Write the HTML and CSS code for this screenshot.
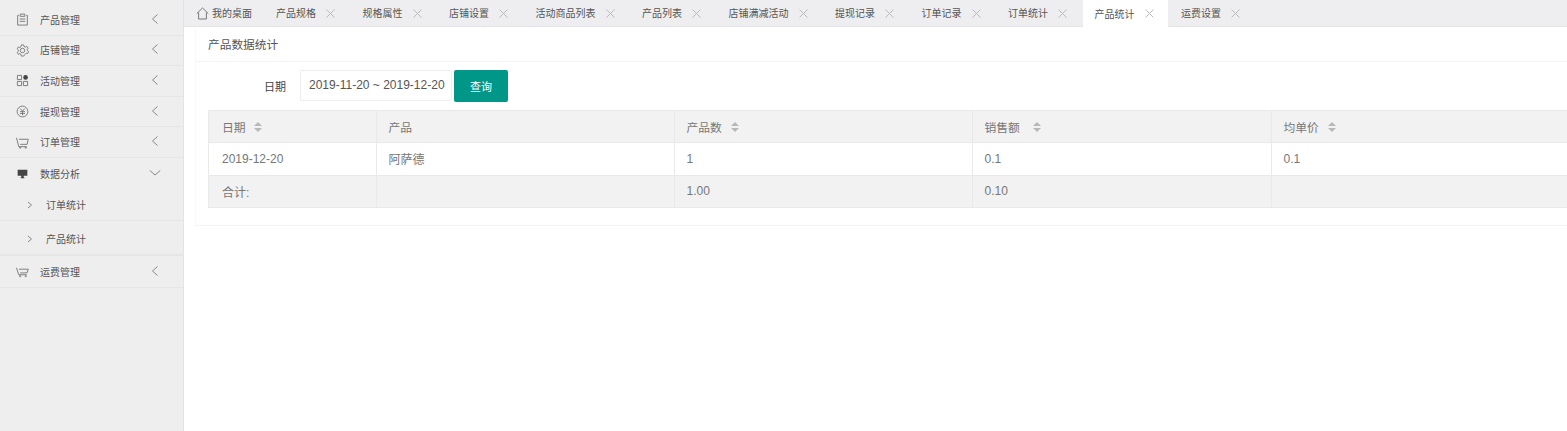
FILE: index.html
```html
<!DOCTYPE html>
<html lang="zh">
<head>
<meta charset="utf-8">
<title>产品数据统计</title>
<link rel="stylesheet" href="styles.css">
</head>
<body>
<div class="app">
  <aside class="side">
    <div class="nav-row">
      <svg class="nav-icon" viewBox="0 0 14 14"><path d="M3 2.500H1.800v10.500h10.400V2.500H11M4.500 1.200h5v2.400h-5zM4 6.500h6M4 9h6" /></svg>
      <span class="nav-text">产品管理</span>
      <svg class="chev" viewBox="0 0 12 12"><path d="M8.500 1.500 3.500 6l5 4.500"/></svg>
    </div>
    <div class="nav-row">
      <svg class="nav-icon" viewBox="0 0 14 14"><circle cx="7" cy="7" r="2.400"/><path d="M5.800 1h2.400l.4 1.600 1.500.7 1.500-.8 1.500 2-1 1.200.2 1.300 1.300 1-1 2.200-1.600-.3-1.100 1.100L8.200 13H5.800l-.4-1.800-1.300-.7-1.600.6-1.200-2.100 1.200-1.100V6.300L1.300 5.200l1.200-2 1.600.6 1.300-.9z"/></svg>
      <span class="nav-text">店铺管理</span>
      <svg class="chev" viewBox="0 0 12 12"><path d="M8.500 1.500 3.500 6l5 4.500"/></svg>
    </div>
    <div class="nav-row">
      <svg class="nav-icon" viewBox="0 0 14 14"><path d="M1.500 1.500h4.500v4.500H1.500zM1.500 8h4.500v4.500H1.500zM8 8h4.500v4.500H8z"/><circle class="solid" cx="10.300" cy="3.700" r="2.500"/></svg>
      <span class="nav-text">活动管理</span>
      <svg class="chev" viewBox="0 0 12 12"><path d="M8.500 1.500 3.500 6l5 4.500"/></svg>
    </div>
    <div class="nav-row">
      <svg class="nav-icon" viewBox="0 0 14 14"><circle cx="7" cy="7" r="5.800"/><path d="M4.600 3.800 7 6.600l2.400-2.800M4.300 7.200h5.400M4.300 9.200h5.400M7 6.600V11"/></svg>
      <span class="nav-text">提现管理</span>
      <svg class="chev" viewBox="0 0 12 12"><path d="M8.500 1.500 3.500 6l5 4.500"/></svg>
    </div>
    <div class="nav-row">
      <svg class="nav-icon" viewBox="0 0 14 14"><path d="M.5 2 3 11.500h8.500M3.200 3.500h10l-1.300 5.500H4.500"/><circle cx="4.500" cy="12.500" r=".7"/><circle cx="10.500" cy="12.500" r=".7"/></svg>
      <span class="nav-text">订单管理</span>
      <svg class="chev" viewBox="0 0 12 12"><path d="M8.500 1.500 3.500 6l5 4.500"/></svg>
    </div>
    <div class="nav-row nav-open">
      <svg class="nav-icon" viewBox="0 0 14 14"><path class="solid" d="M1.800 3h10.400v6.500H8.300V11H9v1H5v-1h.7V9.500H1.800z"/></svg>
      <span class="nav-text">数据分析</span>
      <svg class="chev" viewBox="0 0 12 12"><path d="M.8 3.500 6 8l5.200-4.500"/></svg>
    </div>
    <div class="sub-row">
      <svg class="sub-chev" viewBox="0 0 8 8"><path d="M2 1l3.500 3L2 7"/></svg>
      <span class="nav-text">订单统计</span>
    </div>
    <div class="sub-row sub-last">
      <svg class="sub-chev" viewBox="0 0 8 8"><path d="M2 1l3.500 3L2 7"/></svg>
      <span class="nav-text">产品统计</span>
    </div>
    <div class="nav-row nav-final">
      <svg class="nav-icon" viewBox="0 0 14 14"><path d="M.5 3 3 10.500h8.500M3.200 4.500h10l-1.300 4H4.500"/><circle cx="4.500" cy="12" r=".7"/><circle cx="10.500" cy="12" r=".7"/></svg>
      <span class="nav-text">运费管理</span>
      <svg class="chev" viewBox="0 0 12 12"><path d="M8.500 1.500 3.500 6l5 4.500"/></svg>
    </div>
  </aside>
  <main class="main">
    <nav class="tabs">
      <div class="tab tab-home">
        <svg class="home" viewBox="0 0 13 13"><path d="M.8 6.500 6.500 1l5.700 5.500M2.600 5.500V12h7.800V5.500"/></svg>
        <span>我的桌面</span>
      </div>
      <div class="tab"><span>产品规格</span><svg class="close" viewBox="0 0 9 9"><path d="M.5.500l8 8M8.500.500l-8 8"/></svg></div>
      <div class="tab"><span>规格属性</span><svg class="close" viewBox="0 0 9 9"><path d="M.5.500l8 8M8.500.500l-8 8"/></svg></div>
      <div class="tab"><span>店铺设置</span><svg class="close" viewBox="0 0 9 9"><path d="M.5.500l8 8M8.500.500l-8 8"/></svg></div>
      <div class="tab"><span>活动商品列表</span><svg class="close" viewBox="0 0 9 9"><path d="M.5.500l8 8M8.500.500l-8 8"/></svg></div>
      <div class="tab"><span>产品列表</span><svg class="close" viewBox="0 0 9 9"><path d="M.5.500l8 8M8.500.500l-8 8"/></svg></div>
      <div class="tab"><span>店铺满减活动</span><svg class="close" viewBox="0 0 9 9"><path d="M.5.500l8 8M8.500.500l-8 8"/></svg></div>
      <div class="tab"><span>提现记录</span><svg class="close" viewBox="0 0 9 9"><path d="M.5.500l8 8M8.500.500l-8 8"/></svg></div>
      <div class="tab"><span>订单记录</span><svg class="close" viewBox="0 0 9 9"><path d="M.5.500l8 8M8.500.500l-8 8"/></svg></div>
      <div class="tab"><span>订单统计</span><svg class="close" viewBox="0 0 9 9"><path d="M.5.500l8 8M8.500.500l-8 8"/></svg></div>
      <div class="tab tab-active"><span>产品统计</span><svg class="close" viewBox="0 0 9 9"><path d="M.5.500l8 8M8.500.500l-8 8"/></svg></div>
      <div class="tab"><span>运费设置</span><svg class="close" viewBox="0 0 9 9"><path d="M.5.500l8 8M8.500.500l-8 8"/></svg></div>
    </nav>
    <section class="card">
      <h2 class="card-title">产品数据统计</h2>
      <div class="card-body">
        <form class="query">
          <label class="query-label">日期</label>
          <div class="query-input">2019-11-20 ~ 2019-12-20</div>
          <div class="query-btn">查询</div>
        </form>
        <table class="grid">
          <colgroup><col class="c1"><col class="c2"><col class="c3"><col class="c4"><col class="c5"></colgroup>
          <thead>
            <tr>
              <th class="th-first"><span class="th-label">日期</span><span class="sort sort-first"><i class="up"></i><i class="down"></i></span></th>
              <th><span class="th-label">产品</span></th>
              <th><span class="th-label">产品数</span><span class="sort"><i class="up"></i><i class="down"></i></span></th>
              <th><span class="th-label">销售额</span><span class="sort sort-wide"><i class="up"></i><i class="down"></i></span></th>
              <th><span class="th-label">均单价</span><span class="sort"><i class="up"></i><i class="down"></i></span></th>
            </tr>
          </thead>
          <tbody>
            <tr><td class="td-first">2019-12-20</td><td>阿萨德</td><td>1</td><td>0.1</td><td>0.1</td></tr>
            <tr class="total"><td class="td-first">合计:</td><td></td><td>1.00</td><td>0.10</td><td></td></tr>
          </tbody>
        </table>
      </div>
    </section>
  </main>
</div>
</body>
</html>
```
FILE: styles.css
```css
* { box-sizing: border-box; }
html, body { margin: 0; height: 100%; background: #fff; overflow: hidden; }
body { font-family: "Noto Sans CJK SC", "Liberation Sans", sans-serif; color: #666; }
.app { display: flex; height: 431px; width: 1567px; overflow: hidden; }

.side { flex: 0 0 184px; background: #eee; border-right: 1px solid #e4e4e4; padding-top: 5px; }
.nav-row { display: flex; align-items: center; height: 30.6px; border-bottom: 1px solid #e6e6e6; padding-left: 16px; }
.nav-open { height: 31.5px; border-bottom: 0; }
.nav-final { height: 32px; }
.nav-icon { width: 13px; height: 13px; fill: none; stroke: #777; stroke-width: 1; flex: none; }
.nav-icon .solid { fill: #444; stroke: none; }
.nav-text { font-size: 10px; line-height: 14px; color: #555; margin-left: 11px; }
.chev { width: 12px; height: 12px; fill: none; stroke: #888; stroke-width: 1; margin: -2px 22px 0 auto; flex: none; }
.sub-row { display: flex; align-items: center; height: 32px; border-bottom: 1px solid #e6e6e6; padding-left: 26px; }
.sub-last { height: 35px; padding-top: 3px; border-bottom-width: 2px; }
.sub-chev { width: 8px; height: 8px; fill: none; stroke: #888; stroke-width: 1; flex: none; }
.sub-row .nav-text { margin-left: 12px; }

.main { flex: 1 1 auto; min-width: 0; }
.tabs { display: flex; height: 27px; background: #eeeef0; border-bottom: 1px solid #e4e4e6; }
.tab { display: flex; align-items: center; height: 26px; padding-left: 12px; margin-right: 1.5px; font-size: 10px; color: #555; white-space: nowrap; flex: none; }
.tab span { line-height: 14px; }
.tab-home { margin-right: 0; padding-right: 12px; }
.tab-active { background: #fff; height: 27px; }
.home { width: 13px; height: 13px; fill: none; stroke: #777; stroke-width: 1; margin-right: 3px; }
.close { width: 9px; height: 9px; margin-left: 10px; margin-right: 14px; fill: none; stroke: #bbb; stroke-width: 1; }

.card { margin-left: 11px; height: 199px; border-left: 1px solid #f8f8f8; border-bottom: 1px solid #f4f4f4; }
.card-title { margin: 0; height: 35px; padding: 10px 0 0 12px; font-size: 11.700px; line-height: 14px; font-weight: 400; color: #555; border-bottom: 1px solid #f4f4f4; }
.card-body { padding: 7px 0 0 12px; }
.query { display: flex; align-items: center; height: 33px; }
.query-label { width: 78px; text-align: right; font-size: 11px; color: #444; margin-right: 1px; }
.query-input { margin-left: 13px; width: 152px; height: 31px; border: 1px solid #eee; border-radius: 2px; font: 12px/29px "Liberation Sans", sans-serif; color: #555; padding-left: 8px; white-space: nowrap; overflow: hidden; }
.query-btn { margin-left: 2px; width: 54px; height: 32px; background: #009688; border-radius: 2px; color: #fff; font-size: 11px; line-height: 32px; text-align: center; }

.grid { margin-top: 8px; width: 1358px; table-layout: fixed; border-collapse: collapse; font-family: "Liberation Sans", "Noto Sans CJK SC", sans-serif; font-size: 12px; color: #777; }
.c1 { width: 167.500px; } .c2 { width: 298px; } .c3 { width: 298px; } .c4 { width: 299px; } .c5 { width: 295.500px; }
.grid th, .grid td { height: 32.300px; padding: 0 12px; border: 1px solid #e9e9e9; text-align: left; font-weight: 400; white-space: nowrap; }
.grid .th-first, .grid .td-first { padding-left: 13px; }
.grid th { background: #f2f2f2; font-size: 11.800px; }
.grid td:last-child, .grid th:last-child { border-right: 0; }
.total td { background: #f2f2f2; }
.th-label { vertical-align: middle; }
.sort { display: inline-flex; flex-direction: column; gap: 2px; vertical-align: middle; margin-left: 9px; }
.sort-first { margin-left: 8px; }
.sort-wide { margin-left: 13px; }
.sort i { display: block; width: 0; height: 0; border-left: 4px solid transparent; border-right: 4px solid transparent; }
.sort .up { border-bottom: 4px solid #b8b8b8; }
.sort .down { border-top: 4px solid #b8b8b8; }
```
